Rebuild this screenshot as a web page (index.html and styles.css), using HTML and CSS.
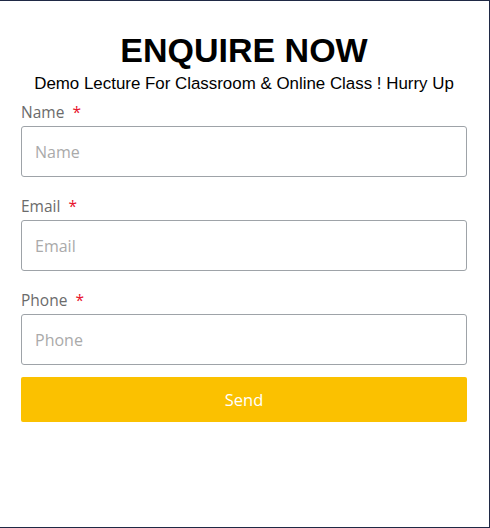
FILE: index.html
```html
<!DOCTYPE html>
<html lang="en">
<head>
    <meta charset="UTF-8">
    <meta name="viewport" content="width=device-width, initial-scale=1.0">
    <title>Enquire Now</title>
    <link rel="stylesheet" href="styles.css">
</head>
<body>

<div class="enquiry">
    <h1>ENQUIRE NOW</h1>
    <p class="subtitle">Demo Lecture For Classroom &amp; Online Class ! Hurry Up</p>

    <form class="enquiry-form">
        <div class="field">
            <label for="name">Name <span class="req">*</span></label>
            <input type="text" id="name" placeholder="Name">
        </div>

        <div class="field">
            <label for="email">Email <span class="req">*</span></label>
            <input type="email" id="email" placeholder="Email">
        </div>

        <div class="field">
            <label for="phone">Phone <span class="req">*</span></label>
            <input type="tel" id="phone" placeholder="Phone">
        </div>

        <button type="button" class="send">Send</button>
    </form>
</div>

</body>
</html>
```

FILE: styles.css
```css
html, body {
    height: 100%;
}
body {
    margin: 0;
    box-sizing: border-box;
    border-top: 1px solid #1f2945;
    border-right: 1px solid #1f2945;
    border-bottom: 1px solid #1f2945;
    background-color: #fff;
    font-family: "Open Sans", sans-serif;
}
.enquiry {
    padding: 30px 22px 0 21px;
}
h1 {
    margin: 0;
    font-family: "Liberation Sans", Arial, sans-serif;
    font-size: 34px;
    font-weight: bold;
    text-align: center;
    color: #000;
}
.subtitle {
    margin: 4px 0 7px;
    font-family: "Liberation Sans", Arial, sans-serif;
    font-size: 16.9px;
    text-align: center;
    color: #000;
}
.field {
    margin-bottom: 18px;
}
label {
    display: block;
    margin-bottom: 3px;
    font-size: 15.5px;
    color: #6b6b6b;
}
.req {
    color: #e8112d;
    margin-left: 4px;
}
input[type="text"], input[type="email"], input[type="tel"] {
    display: block;
    box-sizing: border-box;
    width: 100%;
    height: 51px;
    padding: 0 13px;
    border: 1px solid #9ea3a8;
    border-radius: 3px;
    font-family: "Open Sans", sans-serif;
    font-size: 16px;
    color: #333;
}
input::placeholder {
    color: #aaa;
}
.send {
    display: block;
    width: 100%;
    height: 45px;
    margin-top: -6px;
    border: none;
    border-radius: 2px;
    background-color: #fbc100;
    color: #fff;
    font-family: "Open Sans", sans-serif;
    font-size: 16.5px;
    cursor: pointer;
}
```
